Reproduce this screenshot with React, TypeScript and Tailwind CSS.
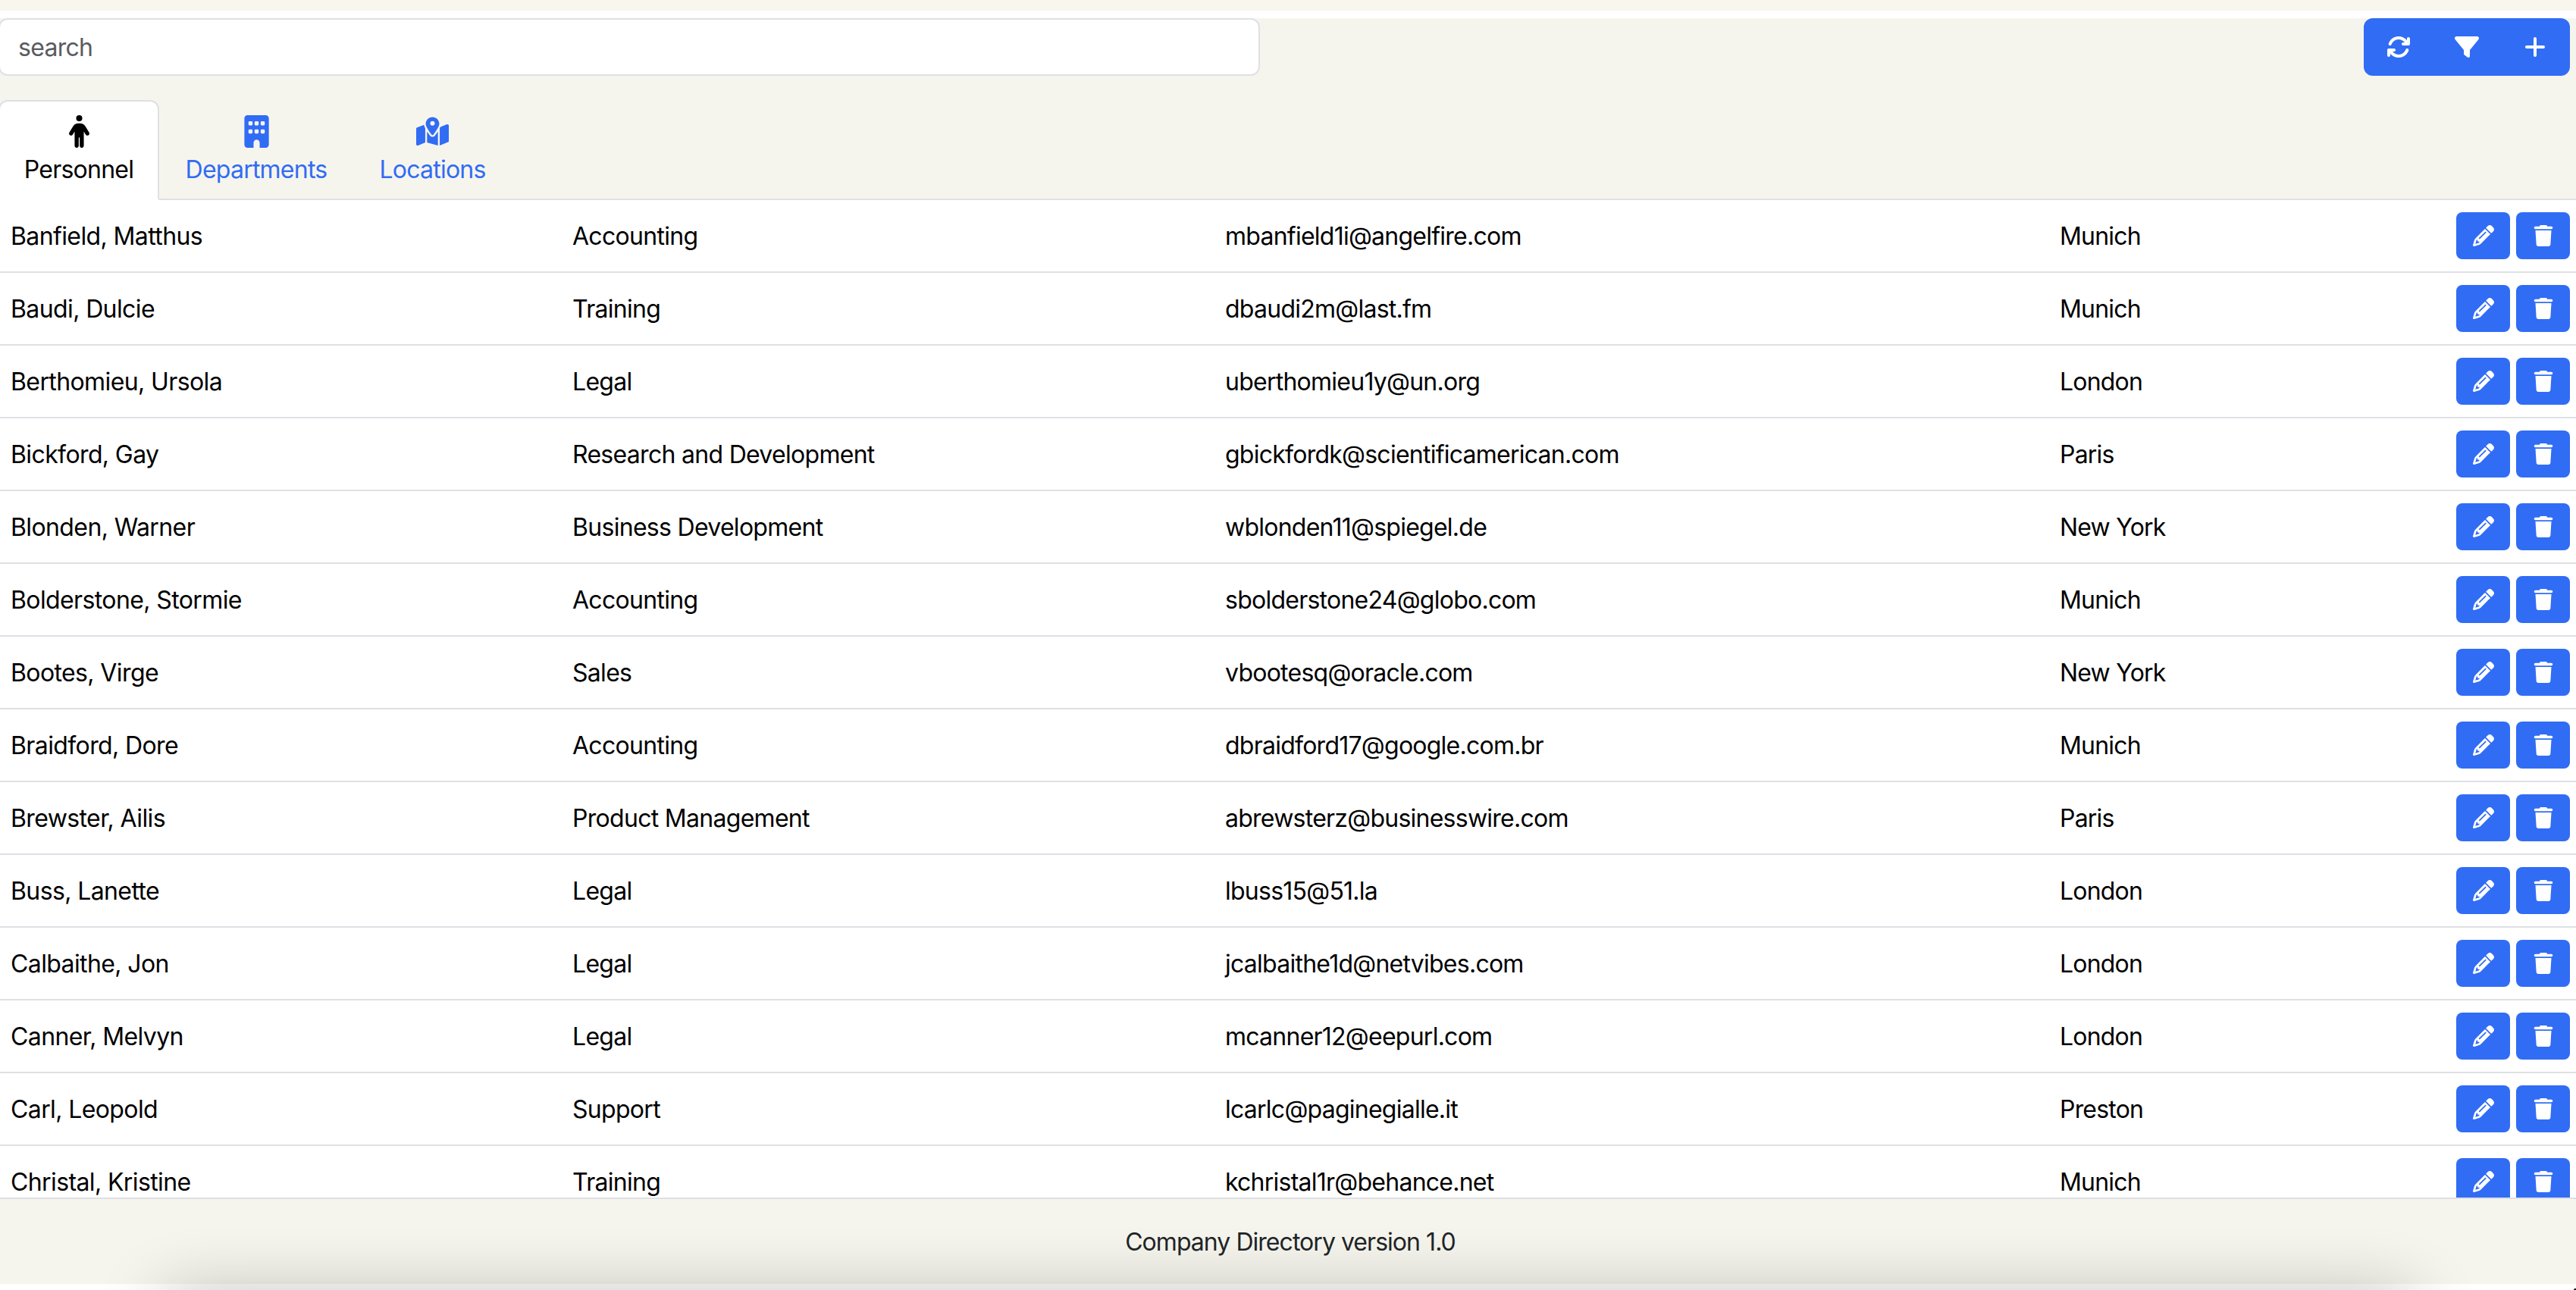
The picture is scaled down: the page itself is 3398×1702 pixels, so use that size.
import React, { useState } from "react";
import {
  FaArrowsRotate,
  FaBuilding,
  FaFilter,
  FaMapLocationDot,
  FaPencil,
  FaPerson,
  FaPlus,
  FaTrash,
} from "react-icons/fa6";

interface Person {
  name: string;
  department: string;
  email: string;
  location: string;
}

const personnel: Person[] = [
  { name: "Banfield, Matthus", department: "Accounting", email: "mbanfield1i@angelfire.com", location: "Munich" },
  { name: "Baudi, Dulcie", department: "Training", email: "dbaudi2m@last.fm", location: "Munich" },
  { name: "Berthomieu, Ursola", department: "Legal", email: "uberthomieu1y@un.org", location: "London" },
  { name: "Bickford, Gay", department: "Research and Development", email: "gbickfordk@scientificamerican.com", location: "Paris" },
  { name: "Blonden, Warner", department: "Business Development", email: "wblonden11@spiegel.de", location: "New York" },
  { name: "Bolderstone, Stormie", department: "Accounting", email: "sbolderstone24@globo.com", location: "Munich" },
  { name: "Bootes, Virge", department: "Sales", email: "vbootesq@oracle.com", location: "New York" },
  { name: "Braidford, Dore", department: "Accounting", email: "dbraidford17@google.com.br", location: "Munich" },
  { name: "Brewster, Ailis", department: "Product Management", email: "abrewsterz@businesswire.com", location: "Paris" },
  { name: "Buss, Lanette", department: "Legal", email: "lbuss15@51.la", location: "London" },
  { name: "Calbaithe, Jon", department: "Legal", email: "jcalbaithe1d@netvibes.com", location: "London" },
  { name: "Canner, Melvyn", department: "Legal", email: "mcanner12@eepurl.com", location: "London" },
  { name: "Carl, Leopold", department: "Support", email: "lcarlc@paginegialle.it", location: "Preston" },
  { name: "Christal, Kristine", department: "Training", email: "kchristal1r@behance.net", location: "Munich" },
];

const tabs = [
  { id: "personnel", label: "Personnel", Icon: FaPerson, width: "-ml-0.5 w-[212px]" },
  { id: "departments", label: "Departments", Icon: FaBuilding, width: "w-[256px]" },
  { id: "locations", label: "Locations", Icon: FaMapLocationDot, width: "w-[209px]" },
];

const toolbar = [
  { id: "refresh", Icon: FaArrowsRotate },
  { id: "filter", Icon: FaFilter },
  { id: "add", Icon: FaPlus },
];

function PersonRow({ person }: { person: Person }) {
  return (
    <div className="flex h-24 shrink-0 items-center border-b-2 border-[#dfe0e5] pr-2 text-black">
      <div className="w-[755px] pt-0.5 pl-[14px] tracking-[-0.019em]">{person.name}</div>
      <div className="w-[861px] pt-0.5">{person.department}</div>
      <div className="w-[1101px] pt-0.5 tracking-[-0.0235em]">{person.email}</div>
      <div className="flex-1 pt-0.5 tracking-[-0.025em]">{person.location}</div>
      <div className="flex gap-2">
        {[FaPencil, FaTrash].map((Icon, i) => (
          <button
            key={i}
            className="flex h-[62px] w-[71px] items-center justify-center rounded-lg bg-[#316cf4] text-white"
          >
            <Icon className="h-7 w-auto" />
          </button>
        ))}
      </div>
    </div>
  );
}

export default function App() {
  const [activeTab, setActiveTab] = useState("personnel");

  return (
    <div className="flex h-[1702px] w-[3398px] flex-col overflow-hidden bg-white font-['Inter','Liberation_Sans',sans-serif] text-[32px] leading-[48px] tracking-[-0.022em]">
      {/* Strip above the app */}
      <div className="mb-[10px] h-[14px] shrink-0 bg-[#f9f6ee]" />

      <header className="flex h-[240px] shrink-0 flex-col justify-between bg-[#f6f5ed]">
        <div className="flex justify-between pr-2">
          <input
            type="text"
            placeholder="search"
            className="-ml-0.5 h-[76px] w-[1664px] rounded-xl border-2 border-[#dfe0e5] bg-white px-6 placeholder:text-[#595c5f]"
          />
          <div className="flex h-[76px] w-[272px] overflow-hidden rounded-xl bg-[#316cf4] text-white">
            {toolbar.map(({ id, Icon }) => (
              <button key={id} className="-mr-0.5 flex w-[92px] shrink-0 items-center justify-center">
                <Icon className="h-8 w-auto" />
              </button>
            ))}
          </div>
        </div>

        <nav className="flex h-[132px] shadow-[inset_0_-2px_0_#dfe0e5]">
          {tabs.map(({ id, label, Icon, width }) => (
            <button
              key={id}
              onClick={() => setActiveTab(id)}
              className={`flex flex-col items-center rounded-t-xl border-2 pt-[18px] ${width} ${
                activeTab === id
                  ? "border-[#dfe0e5] border-b-white bg-white text-black"
                  : "border-transparent text-[#316cf4]"
              }`}
            >
              <Icon className="h-[43px] w-auto" />
              <span className="mt-[5px] tracking-[-0.024em]">{label}</span>
            </button>
          ))}
        </nav>
      </header>

      <main className="flex h-[1316px] shrink-0 flex-col overflow-hidden">
        {personnel.map((person) => (
          <PersonRow key={person.email} person={person} />
        ))}
      </main>

      <div className="relative flex-1">
        <footer className="h-[114px] border-t-2 border-[#dfe0e5] bg-[#f6f5ed] pt-[33px] pl-1.5 text-center tracking-[-0.03em] text-[#212529]">
          Company Directory version 1.0
        </footer>
        {/* Soft shadow rising from below the footer */}
        <div className="absolute top-[134px] right-[215px] left-[215px] h-[60px] rounded-[20px] shadow-[0_0_90px_rgba(0,0,0,0.32)]" />
        {/* Window corner */}
        <div className="absolute right-0 bottom-0 h-0.5 w-[3px] rounded-tl-sm bg-black" />
      </div>
    </div>
  );
}
